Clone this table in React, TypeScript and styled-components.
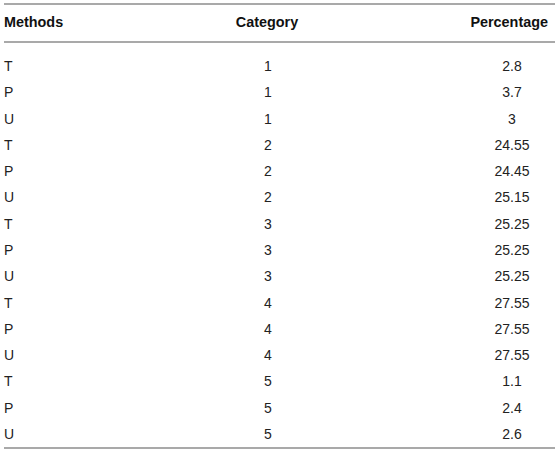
import React from "react";
import styled, { createGlobalStyle } from "styled-components";

const Global = createGlobalStyle`
  html, body { margin: 0; padding: 0; background: #ffffff; }
  body { font-family: "Liberation Sans", Arial, Helvetica, sans-serif; }
`;

const Page = styled.div`
  padding: 3px 4px 0 4px;
  width: 551px;
`;

const Table = styled.div`
  border-top: 2px solid #a9a9a9;
  border-bottom: 2px solid #a9a9a9;
`;

const cols = "69px 388px 94px";

const HeadRow = styled.div`
  display: grid;
  grid-template-columns: ${cols};
  height: 38px;
  box-sizing: border-box;
  padding-bottom: 3px;
  align-items: center;
  border-bottom: 2px solid #a9a9a9;
`;

const Body = styled.div`
  padding-top: 10px;
`;

const Row = styled.div`
  display: grid;
  grid-template-columns: ${cols};
  height: 26.27px;
  align-items: center;
`;

const HeadCell = styled.div<{ $align: "left" | "center" | "right" }>`
  font-size: 14.4px;
  font-weight: 700;
  color: #111;
  text-align: ${(p) => p.$align};
  padding-right: ${(p) => (p.$align === "right" ? "7px" : "0")};
  white-space: nowrap;
`;

const Cell = styled.div<{ $align: "left" | "center"; $shift?: number }>`
  font-size: 14px;
  color: #222;
  text-align: ${(p) => p.$align};
  padding-left: ${(p) => p.$shift ?? 0}px;
  white-space: nowrap;
`;

const data: [string, number, string][] = [
  ["T", 1, "2.8"],
  ["P", 1, "3.7"],
  ["U", 1, "3"],
  ["T", 2, "24.55"],
  ["P", 2, "24.45"],
  ["U", 2, "25.15"],
  ["T", 3, "25.25"],
  ["P", 3, "25.25"],
  ["U", 3, "25.25"],
  ["T", 4, "27.55"],
  ["P", 4, "27.55"],
  ["U", 4, "27.55"],
  ["T", 5, "1.1"],
  ["P", 5, "2.4"],
  ["U", 5, "2.6"],
];

export default function App() {
  return (
    <Page>
      <Global />
      <Table>
        <HeadRow>
          <HeadCell $align="left">Methods</HeadCell>
          <HeadCell $align="center">Category</HeadCell>
          <HeadCell $align="right">Percentage</HeadCell>
        </HeadRow>
        <Body>
          {data.map(([m, c, p], i) => (
            <Row key={i}>
              <Cell $align="left">{m}</Cell>
              <Cell $align="center" $shift={2}>{c}</Cell>
              <Cell $align="center" $shift={8}>{p}</Cell>
            </Row>
          ))}
        </Body>
      </Table>
    </Page>
  );
}
